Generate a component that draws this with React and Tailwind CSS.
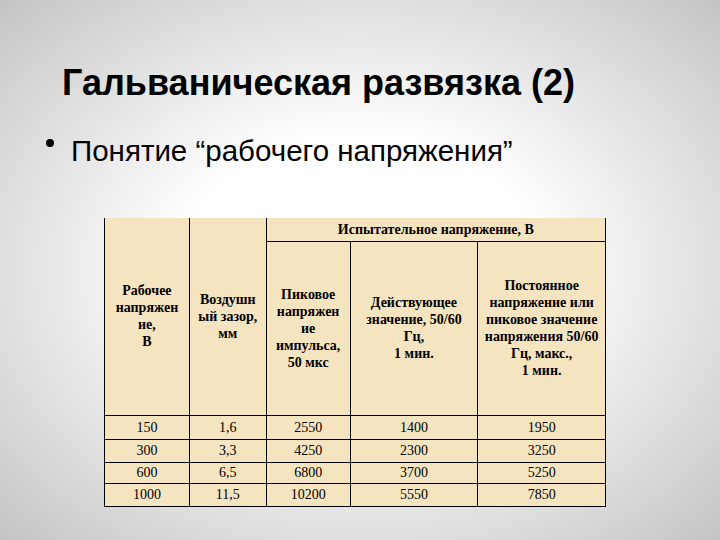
const headers = [
  ["Рабочее", "напряжен", "ие,", "В"],
  ["Воздушн", "ый зазор,", "мм"],
];

const subHeaders = [
  ["Пиковое", "напряжен", "ие", "импульса,", "50 мкс"],
  ["Действующее", "значение, 50/60", "Гц,", "1 мин."],
  ["Постоянное", "напряжение или", "пиковое значение", "напряжения 50/60", "Гц, макс.,", "1 мин."],
];

const rows = [
  ["150", "1,6", "2550", "1400", "1950"],
  ["300", "3,3", "4250", "2300", "3250"],
  ["600", "6,5", "6800", "3700", "5250"],
  ["1000", "11,5", "10200", "5550", "7850"],
];

const rowHeights = ["h-[24px]", "h-[23px]", "h-[21px]", "h-[23px]"];

const serif = "font-['Liberation_Serif','Times_New_Roman',serif]";

const Lines = ({ lines }) => (
  <>
    {lines.map((l, i) => (
      <div key={i}>{l}</div>
    ))}
  </>
);

export default function App() {
  return (
    <div className="w-[720px] h-[540px] overflow-hidden bg-[radial-gradient(ellipse_at_center,#ffffff_35%,#c4c4c4_100%)] font-['Liberation_Sans',Arial,sans-serif] text-black">
      <h1 className="pl-[62px] pt-[63px] text-[36px] leading-[40px] font-bold">
        Гальваническая развязка (2)
      </h1>
      <div className="flex items-start pl-[46px] pt-[33px]">
        <span className="w-[8px] h-[8px] mt-[3px] rounded-full bg-black shrink-0"></span>
        <span className="pl-[17px] text-[29.5px] leading-[30px]">
          Понятие “рабочего напряжения”
        </span>
      </div>
      <div className="pl-[104px] pt-[52px]">
        <table className={`w-[502px] border-collapse bg-[#f5e4c0] ${serif} text-[14px] leading-[17px] text-center`}>
          <colgroup>
            <col className="w-[85px]" />
            <col className="w-[77px]" />
            <col className="w-[84px]" />
            <col className="w-[128px]" />
            <col className="w-[128px]" />
          </colgroup>
          <thead>
            <tr className="h-[23px]">
              {headers.map((h, i) => (
                <th key={i} rowSpan={2} className={`border-x border-b border-black ${serif} font-bold p-0 align-middle`}>
                  <Lines lines={h} />
                </th>
              ))}
              <th colSpan={3} className={`border-x border-b border-black ${serif} font-bold p-0`}>
                Испытательное напряжение, В
              </th>
            </tr>
            <tr className="h-[174px]">
              {subHeaders.map((h, i) => (
                <th key={i} className={`border border-black ${serif} font-bold p-0 align-middle`}>
                  <Lines lines={h} />
                </th>
              ))}
            </tr>
          </thead>
          <tbody>
            {rows.map((r, ri) => (
              <tr key={ri} className={rowHeights[ri]}>
                {r.map((c, ci) => (
                  <td key={ci} className={`border border-black ${serif} p-0`}>
                    {c}
                  </td>
                ))}
              </tr>
            ))}
          </tbody>
        </table>
      </div>
    </div>
  );
}
